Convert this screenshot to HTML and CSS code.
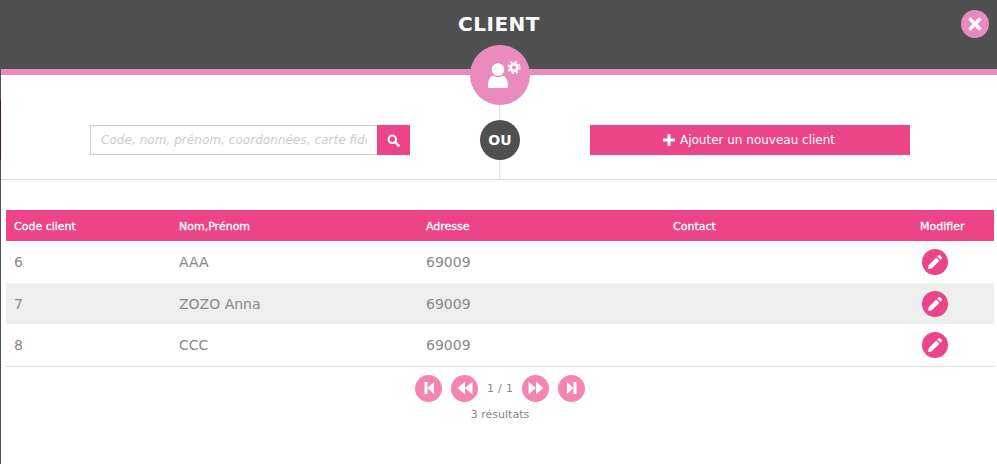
FILE: index.html
```html
<!DOCTYPE html>
<html>
<head>
    <title>Client</title>
    <link rel="stylesheet" href="styles.css">
</head>
<body>

    <div class="modal">

        <!-- Header -->
        <div class="modal-head">
            <h1>CLIENT</h1>
            <a class="close-btn" href="#">
                <svg viewBox="0 0 16 16" width="16" height="16"><path d="M3.600 1.200 8 5.600l4.400-4.400 2.400 2.400L10.400 8l4.400 4.400-2.400 2.400L8 10.400l-4.400 4.400-2.400-2.400L5.600 8 1.200 3.600z" fill="#fff"/></svg>
            </a>
            <div class="head-badge">
                <svg viewBox="0 0 44 40" width="44" height="40">
                    <circle cx="17" cy="14.500" r="6.300" fill="#fff"/>
                    <path d="M8 33c-.6 0-1-.4-1-1 0-6 1.500-10 5-11.500 1.300 1 3 1.500 5 1.500s3.700-.5 5-1.500c3.500 1.500 5 5.500 5 11.500 0 .6-.4 1-1 1z" fill="#fff"/>
                    <circle cx="33" cy="12.500" r="3.400" fill="none" stroke="#fff" stroke-width="2.800"/>
                    <circle cx="33" cy="12.500" r="5.700" fill="none" stroke="#fff" stroke-width="1.800" stroke-dasharray="2.240 2.240"/>
                </svg>
            </div>
        </div>

        <!-- Search or add -->
        <div class="search-row">
            <form class="search-form">
                <input type="text" class="search-input" placeholder="Code, nom, prénom, coordonnées, carte fidélité">
                <button type="button" class="search-btn">
                    <svg viewBox="0 0 14 14" width="13" height="13"><circle cx="5.700" cy="5.700" r="4" fill="none" stroke="#fff" stroke-width="2.200"/><path d="m8.800 8.800 3.700 3.700" stroke="#fff" stroke-width="2.800" stroke-linecap="round"/></svg>
                </button>
            </form>
            <div class="or-circle">OU</div>
            <a class="add-btn" href="#">
                <svg viewBox="0 0 12 12" width="12" height="12"><path d="M4.500 0h3v4.500H12v3H7.500V12h-3V7.500H0v-3h4.500z" fill="#fff"/></svg>
                Ajouter un nouveau client
            </a>
        </div>

        <!-- Client list -->
        <table class="clients">
            <thead>
                <tr>
                    <th class="col-code">Code client</th>
                    <th class="col-name">Nom,Prénom</th>
                    <th class="col-addr">Adresse</th>
                    <th class="col-contact">Contact</th>
                    <th>Modifier</th>
                </tr>
            </thead>
            <tbody>
                <tr>
                    <td>6</td>
                    <td>AAA</td>
                    <td>69009</td>
                    <td></td>
                    <td><a class="edit-btn" href="#"><svg viewBox="0 0 16 16" width="16" height="16"><path d="M11.600 1.300a1 1 0 0 1 1.400 0l1.700 1.700a1 1 0 0 1 0 1.400l-1.300 1.300-3.100-3.100zM9.300 3.600l3.100 3.100-7.500 7.500-3.900.8.800-3.900z" fill="#fff"/></svg></a></td>
                </tr>
                <tr>
                    <td>7</td>
                    <td>ZOZO Anna</td>
                    <td>69009</td>
                    <td></td>
                    <td><a class="edit-btn" href="#"><svg viewBox="0 0 16 16" width="16" height="16"><path d="M11.600 1.300a1 1 0 0 1 1.400 0l1.700 1.700a1 1 0 0 1 0 1.400l-1.300 1.300-3.100-3.100zM9.300 3.600l3.100 3.100-7.500 7.500-3.900.8.800-3.900z" fill="#fff"/></svg></a></td>
                </tr>
                <tr>
                    <td>8</td>
                    <td>CCC</td>
                    <td>69009</td>
                    <td></td>
                    <td><a class="edit-btn" href="#"><svg viewBox="0 0 16 16" width="16" height="16"><path d="M11.600 1.300a1 1 0 0 1 1.400 0l1.700 1.700a1 1 0 0 1 0 1.400l-1.300 1.300-3.100-3.100zM9.300 3.600l3.100 3.100-7.500 7.500-3.900.8.800-3.900z" fill="#fff"/></svg></a></td>
                </tr>
            </tbody>
        </table>

        <!-- Pagination -->
        <div class="pager">
            <a class="page-btn" href="#"><svg viewBox="0 0 14 14" width="14" height="14"><path d="M2.500 1h3v12h-3zM12 1v12L5.500 7z" fill="#fff"/></svg></a>
            <a class="page-btn" href="#"><svg viewBox="0 0 14 14" width="16" height="16"><path d="M7 1.500v11L.5 7zM13.500 1.500v11L7 7z" fill="#fff"/></svg></a>
            <span class="page-num">1 / 1</span>
            <a class="page-btn" href="#"><svg viewBox="0 0 14 14" width="16" height="16"><path d="M7 1.500v11L13.500 7zM.5 1.500v11L7 7z" fill="#fff"/></svg></a>
            <a class="page-btn" href="#"><svg viewBox="0 0 14 14" width="14" height="14"><path d="M11.500 1h-3v12h3zM2 1v12l6.500-6z" fill="#fff"/></svg></a>
        </div>
        <p class="result-count">3 résultats</p>

    </div>

</body>
</html>
```

FILE: styles.css
```css
* {
    box-sizing: border-box;
}
body {
    font-family: "DejaVu Sans", Verdana, sans-serif;
    margin: 0;
    background: #fff;
    color: #888;
}
.modal {
    position: relative;
    border-left: 1px solid #505050;
    height: 464px;
}
/* bit of the page behind the modal showing at the edge */
.modal::before {
    content: "";
    position: absolute;
    top: 100px;
    left: -1px;
    width: 1px;
    height: 60px;
    background: #5a0a35;
}
.modal-head {
    position: relative;
    height: 75px;
    background: #505050;
    border-bottom: 6px solid #e98bbc;
}
.modal-head h1 {
    margin: 0;
    padding-top: 12px;
    font-size: 20px;
    line-height: 24px;
    letter-spacing: .5px;
    color: #fff;
    text-align: center;
}
.close-btn {
    position: absolute;
    top: 10px;
    right: 8px;
    width: 28px;
    height: 28px;
    border-radius: 50%;
    background: #e98bbc;
    display: flex;
    align-items: center;
    justify-content: center;
}
.head-badge {
    position: absolute;
    top: 45px;
    left: 469px;
    width: 60px;
    height: 60px;
    border-radius: 50%;
    background: #e98bbc;
    display: flex;
    align-items: center;
    justify-content: center;
    padding-left: 6px;
    z-index: 2;
}
.search-row {
    position: relative;
    display: flex;
    align-items: center;
    justify-content: space-between;
    height: 105px;
    padding: 45px 87px 19px 89px;
    border-bottom: 1px solid #ddd;
}
.search-row::before {
    content: "";
    position: absolute;
    top: 20px;
    bottom: 0;
    left: 498px;
    width: 1px;
    background: #ddd;
}
.search-form {
    display: flex;
    width: 320px;
    height: 30px;
}
.search-input {
    flex: 1;
    min-width: 0;
    height: 30px;
    border: 1px solid #ccc;
    border-right: none;
    padding: 0 10px;
    font-family: inherit;
    font-size: 12px;
    font-style: italic;
    letter-spacing: .05px;
    outline: none;
}
.search-input::placeholder {
    color: #ccc;
    opacity: 1;
}
.search-btn {
    width: 33px;
    height: 30px;
    padding: 0;
    border: none;
    background: #ec4488;
    display: flex;
    align-items: center;
    justify-content: center;
}
.or-circle {
    position: relative;
    width: 40px;
    height: 40px;
    border-radius: 50%;
    background: #505050;
    color: #fff;
    font-size: 14px;
    font-weight: bold;
    line-height: 41px;
    text-align: center;
}
.add-btn {
    display: flex;
    align-items: center;
    justify-content: center;
    gap: 5px;
    width: 320px;
    height: 30px;
    padding-right: 2px;
    background: #ec4488;
    color: #fff;
    font-size: 12px;
    text-decoration: none;
}
.clients {
    width: 988px;
    margin: 30px 0 0 5px;
    border-collapse: collapse;
    table-layout: fixed;
    border-bottom: 1px solid #ddd;
}
.clients th {
    height: 31px;
    background: #ec4488;
    color: #fff;
    font-size: 11px;
    font-weight: normal;
    -webkit-text-stroke: .3px #fff;
    text-align: left;
    padding: 1px 8px 0;
}
.clients td {
    height: 42px;
    font-size: 14px;
    padding: 0 8px;
}
.clients tbody tr:nth-child(2) td {
    height: 41px;
    padding-top: 1px;
    background: #eee;
}
.col-code {
    width: 165px;
}
.col-name,
.col-addr,
.col-contact {
    width: 247px;
}
.edit-btn {
    width: 26px;
    height: 26px;
    margin-left: 2px;
    border-radius: 50%;
    background: #ec4488;
    display: flex;
    align-items: center;
    justify-content: center;
}
.pager {
    display: flex;
    align-items: center;
    justify-content: center;
    margin-top: 8px;
    gap: 9px;
    padding-left: 2px;
}
.page-btn {
    width: 27px;
    height: 27px;
    border-radius: 50%;
    background: #f485b0;
    display: flex;
    align-items: center;
    justify-content: center;
}
.page-num {
    font-size: 11px;
    letter-spacing: .3px;
    padding-top: 1px;
    width: 26px;
    text-align: center;
    white-space: nowrap;
}
.result-count {
    margin: 6px 0 0;
    padding-left: 2px;
    font-size: 11px;
    line-height: 13px;
    text-align: center;
}
```
